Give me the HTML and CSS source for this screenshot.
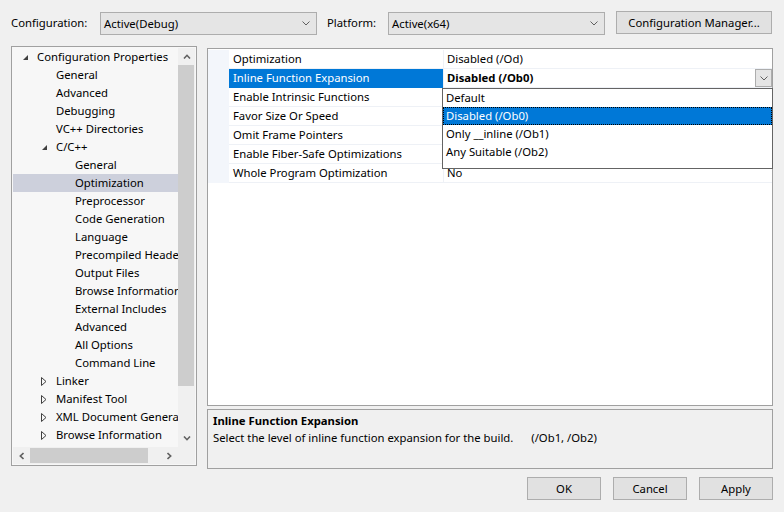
FILE: index.html
```html
<!DOCTYPE html>
<html>
<head>
<meta charset="utf-8">
<link rel="stylesheet" href="styles.css">
</head>
<body>
<div class="dlg">
  <div class="toolbar">
    <span class="lbl lbl-config">Configuration:</span>
    <div class="combo"><span>Active(Debug)</span><svg width="8" height="5" viewBox="0 0 8 5"><path d="M0.5 0.5 L4 4 L7.5 0.5" fill="none" stroke="#606060"/></svg></div>
    <span class="lbl lbl-platform">Platform:</span>
    <div class="combo"><span>Active(x64)</span><svg width="8" height="5" viewBox="0 0 8 5"><path d="M0.5 0.5 L4 4 L7.5 0.5" fill="none" stroke="#606060"/></svg></div>
    <button class="btn btn-cm">Configuration Manager...</button>
  </div>

  <div class="main">
    <div class="tree">
      <ul class="tree-list">
        <li class="node lv0"><span class="exp"><svg width="7" height="7" viewBox="0 0 7 7"><path d="M6 1 L6 6 L1 6 Z" fill="#404040"/></svg></span>Configuration Properties</li>
        <li class="node lv1"><span class="exp"></span>General</li>
        <li class="node lv1"><span class="exp"></span>Advanced</li>
        <li class="node lv1"><span class="exp"></span>Debugging</li>
        <li class="node lv1"><span class="exp"></span>VC++ Directories</li>
        <li class="node lv1"><span class="exp"><svg width="7" height="7" viewBox="0 0 7 7"><path d="M6 1 L6 6 L1 6 Z" fill="#404040"/></svg></span>C/C++</li>
        <li class="node lv2"><span class="exp"></span>General</li>
        <li class="node lv2 sel"><span class="exp"></span>Optimization</li>
        <li class="node lv2"><span class="exp"></span>Preprocessor</li>
        <li class="node lv2"><span class="exp"></span>Code Generation</li>
        <li class="node lv2"><span class="exp"></span>Language</li>
        <li class="node lv2"><span class="exp"></span>Precompiled Headers</li>
        <li class="node lv2"><span class="exp"></span>Output Files</li>
        <li class="node lv2"><span class="exp"></span>Browse Information</li>
        <li class="node lv2"><span class="exp"></span>External Includes</li>
        <li class="node lv2"><span class="exp"></span>Advanced</li>
        <li class="node lv2"><span class="exp"></span>All Options</li>
        <li class="node lv2"><span class="exp"></span>Command Line</li>
        <li class="node lv1"><span class="exp"><svg width="6" height="9" viewBox="0 0 6 9"><path d="M0.5 0.5 L5 4.5 L0.5 8.5 Z" fill="none" stroke="#404040"/></svg></span>Linker</li>
        <li class="node lv1"><span class="exp"><svg width="6" height="9" viewBox="0 0 6 9"><path d="M0.5 0.5 L5 4.5 L0.5 8.5 Z" fill="none" stroke="#404040"/></svg></span>Manifest Tool</li>
        <li class="node lv1"><span class="exp"><svg width="6" height="9" viewBox="0 0 6 9"><path d="M0.5 0.5 L5 4.5 L0.5 8.5 Z" fill="none" stroke="#404040"/></svg></span>XML Document Generator</li>
        <li class="node lv1"><span class="exp"><svg width="6" height="9" viewBox="0 0 6 9"><path d="M0.5 0.5 L5 4.5 L0.5 8.5 Z" fill="none" stroke="#404040"/></svg></span>Browse Information</li>
      </ul>
      <div class="vscroll">
        <div class="sb-btn"><svg width="8" height="5" viewBox="0 0 8 5"><path d="M1 4.5 L4 1.3 L7 4.5" fill="none" stroke="#606060" stroke-width="1.6"/></svg></div>
        <div class="vthumb"></div>
        <div class="sb-fill"></div>
        <div class="sb-btn"><svg width="8" height="5" viewBox="0 0 8 5"><path d="M1 0.5 L4 3.7 L7 0.5" fill="none" stroke="#606060" stroke-width="1.6"/></svg></div>
      </div>
      <div class="hscroll">
        <div class="sb-btn"><svg width="5" height="8" viewBox="0 0 5 8"><path d="M4.5 1 L1.3 4 L4.5 7" fill="none" stroke="#606060" stroke-width="1.6"/></svg></div>
        <div class="hthumb"></div>
        <div class="sb-fill"></div>
        <div class="sb-btn"><svg width="5" height="8" viewBox="0 0 5 8"><path d="M0.5 1 L3.7 4 L0.5 7" fill="none" stroke="#606060" stroke-width="1.6"/></svg></div>
      </div>
      <div class="corner"></div>
    </div>

    <div class="right">
      <div class="pg">
        <div class="pg-row"><div class="pg-gut"></div><div class="pg-name">Optimization</div><div class="pg-val">Disabled (/Od)</div></div>
        <div class="pg-row sel"><div class="pg-gut"></div><div class="pg-name">Inline Function Expansion</div><div class="pg-val edit"><span>Disabled (/Ob0)</span><span class="dd-btn"><svg width="8" height="5" viewBox="0 0 8 5"><path d="M0.5 0.5 L4 4 L7.5 0.5" fill="none" stroke="#606060"/></svg></span></div></div>
        <div class="pg-row"><div class="pg-gut"></div><div class="pg-name">Enable Intrinsic Functions</div><div class="pg-val"></div></div>
        <div class="pg-row"><div class="pg-gut"></div><div class="pg-name">Favor Size Or Speed</div><div class="pg-val"></div></div>
        <div class="pg-row"><div class="pg-gut"></div><div class="pg-name">Omit Frame Pointers</div><div class="pg-val"></div></div>
        <div class="pg-row"><div class="pg-gut"></div><div class="pg-name">Enable Fiber-Safe Optimizations</div><div class="pg-val"></div></div>
        <div class="pg-row"><div class="pg-gut"></div><div class="pg-name">Whole Program Optimization</div><div class="pg-val">No</div></div>

        <div class="dd-list">
          <div class="dd-item">Default</div>
          <div class="dd-item sel">Disabled (/Ob0)</div>
          <div class="dd-item">Only __inline (/Ob1)</div>
          <div class="dd-item">Any Suitable (/Ob2)</div>
        </div>
      </div>
      <div class="desc">
        <div class="desc-title">Inline Function Expansion</div>
        <div class="desc-text">Select the level of inline function expansion for the build.<span class="desc-sw">(/Ob1, /Ob2)</span></div>
      </div>
    </div>
  </div>

  <div class="footer">
    <button class="btn btn-act">OK</button>
    <button class="btn btn-act">Cancel</button>
    <button class="btn btn-act">Apply</button>
  </div>
</div>
</body>
</html>
```

FILE: styles.css
```css
html, body {
  margin: 0;
  padding: 0;
}
body {
  background: #f0f0f0;
  font-family: "Noto Sans", "Segoe UI", sans-serif;
  font-size: 11.3px;
  color: #000;
  width: 784px;
  height: 512px;
  overflow: hidden;
}
.dlg {
  width: 762px;
  padding-left: 11px;
}

/* top toolbar */
.toolbar {
  display: flex;
  align-items: flex-start;
  margin-top: 11px;
  height: 24px;
}
.lbl {
  height: 23px;
  line-height: 23px;
  white-space: nowrap;
}
.lbl-config { width: 89px; }
.lbl-platform { width: 61px; margin-left: 10px; }
.combo {
  box-sizing: border-box;
  width: 217px;
  height: 23px;
  margin-top: 1px;
  border: 1px solid #adadad;
  background: #e5e5e5;
  display: flex;
  align-items: center;
  justify-content: space-between;
  padding: 0 6px 0 3px;
}
.btn {
  box-sizing: border-box;
  border: 1px solid #adadad;
  background: #e1e1e1;
  font: inherit;
  color: #000;
  padding: 0;
  margin: 0;
}
.btn-cm {
  width: 156px;
  height: 23px;
  margin-left: 11px;
}

/* main */
.main {
  display: flex;
  gap: 10px;
  margin-top: 11px;
}

/* tree */
.tree {
  box-sizing: border-box;
  width: 186px;
  height: 420px;
  border: 1px solid #a0a0a0;
  background: #f7f7f7;
  padding: 1px;
  display: grid;
  grid-template-columns: 165px 17px;
  grid-template-rows: 399px 17px;
}
.tree-list {
  list-style: none;
  margin: 0;
  padding: 0;
  overflow: hidden;
}
.node {
  height: 18px;
  line-height: 18px;
  display: flex;
  align-items: center;
  white-space: nowrap;
}
.node.sel { background: #cdd0dc; }
.lv0 { padding-left: 8px; }
.lv1 { padding-left: 27px; }
.lv2 { padding-left: 46px; }
.exp {
  flex: none;
  width: 15px;
  padding-left: 1px;
  display: flex;
  align-items: center;
}
.vscroll {
  background: #f0f0f0;
  display: flex;
  flex-direction: column;
}
.hscroll {
  background: #f0f0f0;
  display: flex;
}
.sb-btn {
  flex: none;
  width: 17px;
  height: 17px;
  display: flex;
  align-items: center;
  justify-content: center;
}
.sb-fill { flex: 1; }
.vthumb {
  flex: none;
  height: 321px;
  margin-right: 1px;
  background: #cdcdcd;
}
.hthumb {
  flex: none;
  width: 118px;
  margin: 1px 0;
  background: #cdcdcd;
}
.corner { background: #f0f0f0; }

/* right column */
.right {
  width: 566px;
  margin-top: 2px;
  display: flex;
  flex-direction: column;
  gap: 3px;
}
.pg {
  box-sizing: border-box;
  height: 358px;
  border: 1px solid #a0a0a0;
  background: #fff;
  padding-top: 1px;
  position: relative;
}
.pg-row {
  display: grid;
  grid-template-columns: 21px 214px 1fr;
  height: 19px;
}
.pg-gut { background: #f3f6fb; }
.pg-name, .pg-val {
  box-sizing: border-box;
  height: 19px;
  line-height: 18px;
  border-bottom: 1px solid #eef1f6;
  white-space: nowrap;
  overflow: hidden;
}
.pg-name { padding-left: 4px; }
.pg-val {
  border-left: 1px solid #eef1f6;
  padding-left: 3px;
}
.pg-row.sel .pg-name {
  background: #0078d7;
  color: #fff;
  border-bottom-color: #0078d7;
}
.pg-val.edit {
  display: flex;
  justify-content: space-between;
  align-items: flex-start;
  font-weight: bold;
}
.dd-btn {
  box-sizing: border-box;
  width: 17px;
  height: 18px;
  border: 1px solid #adadad;
  background: #e5e5e5;
  display: flex;
  align-items: center;
  justify-content: center;
  font-weight: normal;
}
.dd-list {
  position: absolute;
  left: 234px;
  top: 39px;
  width: 331px;
  height: 81px;
  box-sizing: border-box;
  border: 1px solid #646464;
  background: #fff;
}
.dd-item {
  height: 18px;
  line-height: 18px;
  padding-left: 3px;
  white-space: nowrap;
}
.dd-item.sel {
  background: #0078d7;
  color: #fff;
  outline: 1px dotted #000;
  outline-offset: -1px;
}

/* description */
.desc {
  box-sizing: border-box;
  height: 60px;
  border: 1px solid #a0a0a0;
  padding: 2px 5px;
}
.desc-title {
  font-weight: bold;
  line-height: 17px;
}
.desc-text {
  line-height: 17px;
  white-space: nowrap;
}
.desc-sw { margin-left: 18px; }

/* footer */
.footer {
  display: flex;
  justify-content: flex-end;
  gap: 12px;
  margin-top: 8px;
}
.btn-act {
  width: 74px;
  height: 23px;
}
```
